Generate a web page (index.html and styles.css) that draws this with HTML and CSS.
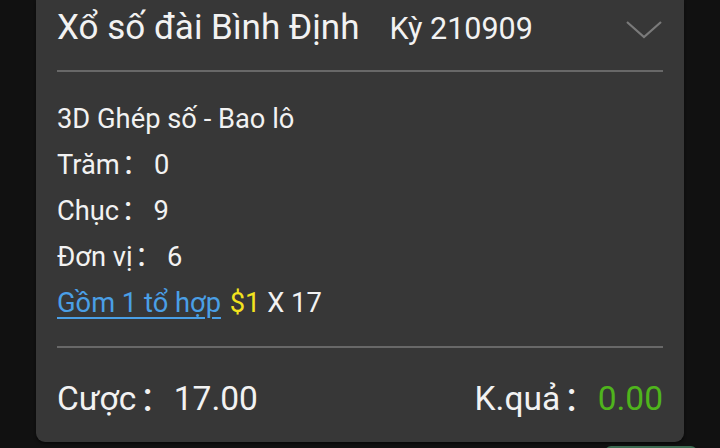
FILE: index.html
```html
<!DOCTYPE html>
<html lang="vi">
<head>
    <meta charset="UTF-8">
    <meta name="viewport" content="width=device-width, initial-scale=1.0">
    <title>Chi tiết cược</title>
    <link rel="stylesheet" href="styles.css">
</head>
<body>
    <div class="card">
        <!-- Header: lottery name + draw number -->
        <div class="card-header">
            <span class="title">Xổ số đài Bình Định</span>
            <span class="draw">Kỳ 210909</span>
            <svg class="chevron" width="38" height="20" viewBox="0 0 38 20">
                <polyline points="2,2 19,17 36,2" fill="none" stroke="#7a7a7a" stroke-width="2.2"/>
            </svg>
        </div>

        <div class="card-body">
            <div class="row">3D Ghép số - Bao lô</div>
            <div class="row">Trăm<span class="colon">：</span><span class="val">0</span></div>
            <div class="row">Chục<span class="colon">：</span><span class="val">9</span></div>
            <div class="row">Đơn vị<span class="colon">：</span><span class="val">6</span></div>
            <div class="row">
                <a href="#" class="combo">Gồm 1 tổ hợp</a>
                <span class="price">$1</span> X 17
            </div>
        </div>

        <div class="card-footer">
            <div>Cược<span class="colon">：</span><span class="amount">17.00</span></div>
            <div>K.quả<span class="colon">：</span><span class="amount win">0.00</span></div>
        </div>
    </div>
    <div class="next-button"></div>
</body>
</html>
```

FILE: styles.css
```css
body {
    margin: 0;
    height: 448px;
    overflow: hidden;
    background-color: #111111;
    font-family: Roboto, "Noto Sans CJK SC", sans-serif;
    color: #f2f2f2;
}

.card {
    margin: 0 36px;
    padding: 0 21px;
    height: 442px;
    box-sizing: border-box;
    background-color: #373737;
    border-radius: 0 0 9px 9px;
    box-shadow: 0 2px 3px rgba(0, 0, 0, 0.5);
}

.card-header {
    display: flex;
    align-items: baseline;
    height: 72px;
    padding-top: 8px;
    box-sizing: border-box;
    border-bottom: 2px solid #686868;
}

.title {
    font-size: 35px;
    line-height: 40px;
}

.draw {
    font-size: 30.5px;
    line-height: 40px;
    margin-left: 30px;
}

.chevron {
    margin-left: auto;
    align-self: flex-start;
    margin-top: 12px;
}

.card-body {
    padding: 24px 0 20px;
    border-bottom: 2px solid #686868;
}

.row {
    font-size: 27.3px;
    line-height: 46px;
    white-space: nowrap;
}

.colon {
    padding-left: 2px;
}

.val {
    margin-left: 5px;
}

.combo {
    color: #4a9fe6;
    text-decoration: underline;
    text-decoration-thickness: 2px;
    text-underline-offset: 5px;
}

.price {
    color: #f2e31e;
    margin-left: 2px;
}

.card-footer {
    display: flex;
    justify-content: space-between;
    font-size: 33.5px;
    line-height: 44px;
    padding-top: 29px;
}

.card-footer .colon {
    padding-left: 3px;
}

.amount {
    margin-left: 1px;
}

.win {
    color: #4fb41c;
}

.next-button {
    margin: 4px 0 0 605px;
    width: 92px;
    height: 12px;
    background-color: #3d6b52;
    border-radius: 6px;
}
```
